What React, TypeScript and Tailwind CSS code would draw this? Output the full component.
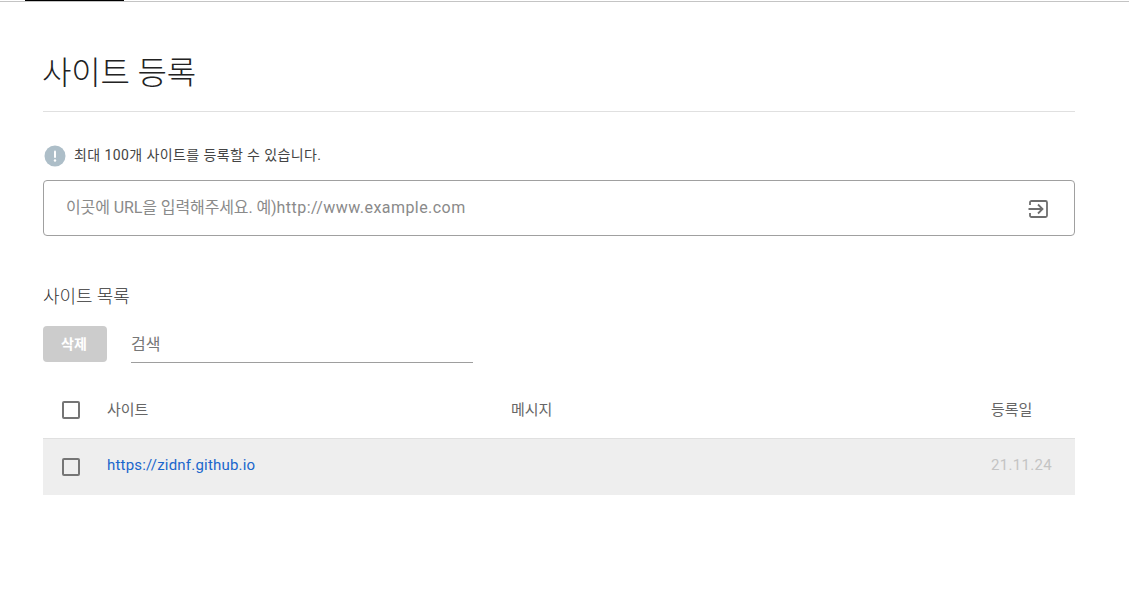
import React from 'react';

const fontStack = "font-['Roboto','Noto_Sans_CJK_KR',sans-serif]";

const Checkbox = () => (
    <span className="block w-[18px] h-[18px] rounded-[2px] border-2 border-[#757575] bg-transparent"></span>
);

const App: React.FC = () => {
    return (
        <div className={`${fontStack} w-[1129px] h-[607px] bg-white overflow-hidden`}>
            <div className="h-[2px] border-b border-[#c4c4c4] pl-[25px]">
                <div className="w-[99px] h-[1px] bg-black"></div>
            </div>

            <div className="w-[1032px] ml-[43px]">
                <div className="h-[110px] border-b border-[#e0e0e0] pt-[48px]">
                    <h1 className="-ml-px text-[32px] leading-[46px] font-light text-[#222] tracking-[-0.15px]">사이트 등록</h1>
                </div>

                <div className="flex items-center h-[22px] mt-[33px]">
                    <svg width="22" height="22" viewBox="0 0 22 22" className="ml-[1px]">
                        <circle cx="11" cy="11" r="10.5" fill="#adbec8" />
                        <rect x="10" y="5.5" width="2" height="7.5" rx="1" fill="#fff" />
                        <circle cx="11" cy="15.5" r="1.2" fill="#fff" />
                    </svg>
                    <p className="ml-[8px] mb-[2px] text-[14px] leading-[22px] text-[#444] tracking-[0.4px]">최대 100개 사이트를 등록할 수 있습니다.</p>
                </div>

                <div className="flex items-center justify-between h-[56px] mt-[13px] pl-[22px] pr-[25px] border border-[#a0a0a0] rounded-[4px]">
                    <span className="text-[16px] text-[#8a8a8a]">
                        <span className="tracking-[-0.1px]">이곳에 URL을 입력해주세요. 예)</span>
                        <span className="tracking-[0.45px]">http://www.example.com</span>
                    </span>
                    <svg width="22" height="22" viewBox="0 0 22 22" fill="none" stroke="#6e6e6e" strokeWidth="1.800" className="mt-[2px]">
                        <path d="M3 7V4.500C3 3.700 3.700 3 4.500 3h14c.8 0 1.500.7 1.500 1.500v13c0 .8-.7 1.500-1.500 1.500h-14C3.700 19 3 18.300 3 17.500V15" />
                        <path d="M1.500 11H15M11 6.500l4.500 4.500-4.500 4.500" />
                    </svg>
                </div>

                <h2 className="mt-[49px] text-[18px] leading-[24px] font-light text-[#333] tracking-[-0.1px]">사이트 목록</h2>

                <div className="flex items-start mt-[17px]">
                    <button className="w-[64px] h-[36px] pr-[2px] rounded-[4px] bg-[#cccccc] text-white text-[14px] font-bold">삭제</button>
                    <div className="w-[342px] h-[37px] ml-[24px] border-b border-[#9e9e9e] text-[16px] leading-[37px] text-[#777]">검색</div>
                </div>

                <div className="flex items-center h-[57px] mt-[19px] pl-[19px] border-b border-[#e0e0e0] text-[15px] text-[#666]">
                    <Checkbox />
                    <span className="w-[404px] ml-[27px]">사이트</span>
                    <span className="flex-1">메시지</span>
                    <span className="w-[84px]">등록일</span>
                </div>

                <div className="flex items-center h-[56px] pl-[19px] bg-[#eeeeee] text-[15px]">
                    <Checkbox />
                    <a className="w-[404px] ml-[27px] mb-[3px] text-[#1a66cc] tracking-[0.2px]">https://zidnf.github.io</a>
                    <span className="flex-1"></span>
                    <span className="w-[84px] mb-[3px] text-[#c4c4c4] tracking-[0.3px]">21.11.24</span>
                </div>
            </div>
        </div>
    );
};

export default App;
